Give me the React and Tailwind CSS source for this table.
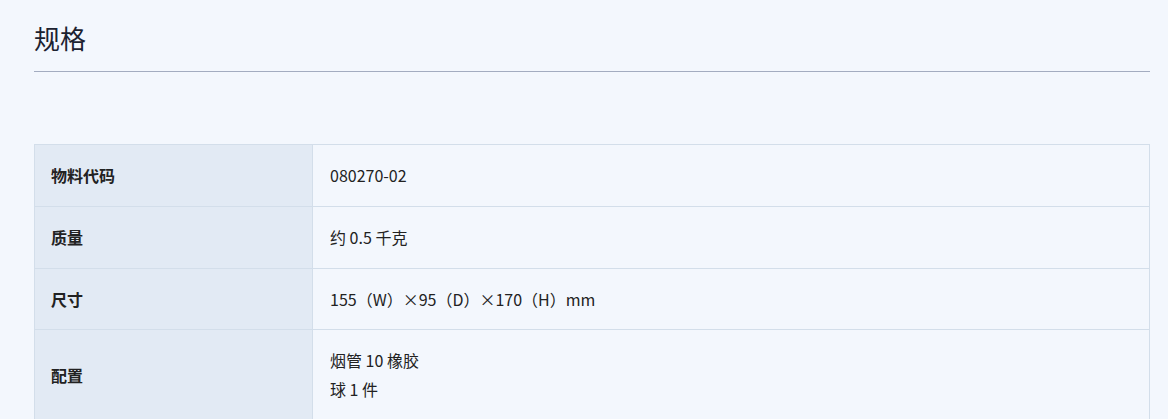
import React from 'react';

const specs = [
  { label: '物料代码', value: ['080270-02'] },
  { label: '质量', value: ['约 0.5 千克'] },
  { label: '尺寸', value: ['155（W）×95（D）×170（H）mm'] },
  { label: '配置', value: ['烟管 10 橡胶', '球 1 件'] },
];

const App = () => {
  return (
    <div className="min-h-screen bg-[#f3f7fd] pl-[34px] pr-[18px] pt-[19px] font-['Noto_Sans_CJK_SC','Noto_Sans',sans-serif] text-[#222]">
      <h2 className="text-[26px] leading-[38px] text-[#1c2230] pb-[14px] border-b border-[#a3acc0]">规格</h2>

      <table className="mt-[72px] w-full border-collapse text-[16px] leading-[1.8]">
        <tbody>
          {specs.map((row, i) => (
            <tr key={i}>
              <th className="w-[278px] border border-[#d3deea] bg-[#e2eaf4] px-[16px] py-[16px] text-left font-bold">
                {row.label}
              </th>
              <td className="border border-[#d3deea] px-[17px] py-[16px] align-middle">
                {row.value.map((line, j) => (
                  <div key={j}>{line}</div>
                ))}
              </td>
            </tr>
          ))}
        </tbody>
      </table>
    </div>
  );
};

export default App;
